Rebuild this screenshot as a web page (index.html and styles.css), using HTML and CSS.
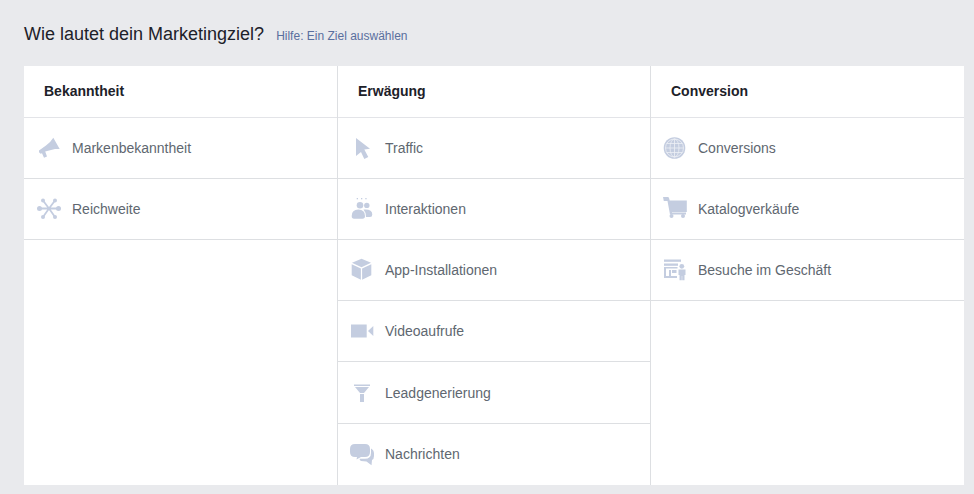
FILE: index.html
```
<!DOCTYPE html>
<html lang="de">
<head>
<meta charset="utf-8">
<title>Marketingziel</title>
<link rel="stylesheet" href="styles.css">
</head>
<body>
<header class="title-bar">
  <h1 class="title">Wie lautet dein Marketingziel?</h1>
  <a class="help" href="#">Hilfe: Ein Ziel auswählen</a>
</header>
<main class="board">
  <section class="col">
    <h2 class="col-head">Bekanntheit</h2>
    <div class="row"><span class="ico"><svg width="26" height="24" viewBox="0 0 26 24"><path class="f" d="M16.300 1.800 L22.700 13 L18 13 L8.200 15.500 L10 20.500 L7 21.700 L5 17.200 L3.500 17.700 Q1.300 16.500 2 14.500 L9 9.500 Q13.500 6.500 16.300 1.800Z"/></svg></span><span class="label">Markenbekanntheit</span></div>
    <div class="row"><span class="ico"><svg width="26" height="24" viewBox="0 0 26 24"><g class="s"><path d="M12 11.500 L6 3.500M12 11.500 L18 3.500M12 11.500 L3 11.500M12 11.500 L21 11.500M12 11.500 L6 20M12 11.500 L18 20"/></g><g class="f"><circle cx="6" cy="3.500" r="2"/><circle cx="18" cy="3.500" r="2"/><circle cx="2.500" cy="11.500" r="2.500"/><circle cx="21.500" cy="11.500" r="2.500"/><circle cx="6" cy="20" r="2"/><circle cx="18" cy="20" r="2"/></g></svg></span><span class="label">Reichweite</span></div>
  </section>
  <section class="col">
    <h2 class="col-head">Erwägung</h2>
    <div class="row"><span class="ico"><svg width="26" height="24" viewBox="0 0 26 24"><path class="f" d="M6 2 L20 12.800 L14.300 13.500 L18.300 21 L14.300 23 L11 16 L6 20Z"/></svg></span><span class="label">Traffic</span></div>
    <div class="row"><span class="ico"><svg width="26" height="24" viewBox="0 0 26 24"><g class="f"><rect x="6.700" y="1" width="1.300" height="1.300"/><rect x="11" y="1" width="1.300" height="1.300"/><rect x="15.300" y="1" width="1.300" height="1.300"/><circle cx="10" cy="8.200" r="3.300"/><circle cx="16.800" cy="8.400" r="2.700"/><path d="M1.700 19 Q1.700 12.500 8.300 12.500 Q15 12.500 15 19 Q15 21.800 12.500 21.800 L4 21.800 Q1.700 21.800 1.700 19Z"/><path d="M13.500 12.500 Q22.300 11.800 22.300 17.500 Q22.300 20 20 20 L16 20 Q16.200 15.500 13.500 12.500Z"/></g></svg></span><span class="label">Interaktionen</span></div>
    <div class="row"><span class="ico"><svg width="26" height="24" viewBox="0 0 26 24"><g class="f"><path d="M11.500 0.800 L21 4.800 L11.500 9.300 L2 4.800Z"/><path d="M1.700 6.200 L10.900 10.500 L10.900 21.800 L1.700 17.300Z"/><path d="M21.300 6.200 L12.100 10.500 L12.100 21.800 L21.300 17.300Z"/></g></svg></span><span class="label">App-Installationen</span></div>
    <div class="row"><span class="ico"><svg width="26" height="24" viewBox="0 0 26 24"><g class="f"><rect x="1" y="5.500" width="15.700" height="13"/><path d="M18 12 L23.300 7 L23.300 17Z"/></g></svg></span><span class="label">Videoaufrufe</span></div>
    <div class="row"><span class="ico"><svg width="26" height="24" viewBox="0 0 26 24"><g class="f"><rect x="4" y="3.500" width="16" height="1.500"/><path d="M5 6 L19 6 L14 12 L10 12Z"/><rect x="10" y="13" width="4" height="8"/></g></svg></span><span class="label">Leadgenerierung</span></div>
    <div class="row"><span class="ico"><svg width="26" height="24" viewBox="0 0 26 24"><g class="f"><path d="M5 2 L15 2 Q20 2 20 7 L20 10 Q20 15 15 15 L11 15 L6.500 17.500 L7 15 L5 15 Q0 15 0 10 L0 7 Q0 2 5 2Z"/><path d="M21 6.500 Q24 8 24 11.500 L24 14 Q24 17 22 18 L21.500 23.300 L16.500 19.500 L11 19 Q9.500 18 9.500 16.800 L15 16.800 Q21 16.800 21 11Z"/></g></svg></span><span class="label">Nachrichten</span></div>
  </section>
  <section class="col">
    <h2 class="col-head">Conversion</h2>
    <div class="row"><span class="ico"><svg width="26" height="24" viewBox="0 0 26 24"><circle class="f" cx="11.500" cy="12" r="10.800"/><g class="g"><circle cx="11.500" cy="12" r="9"/><ellipse cx="11.500" cy="12" rx="4.500" ry="9"/><path d="M11.500 3V21M2.500 12H20.500M3.500 7.500H19.500M3.500 16.500H19.500"/></g></svg></span><span class="label">Conversions</span></div>
    <div class="row"><span class="ico"><svg width="26" height="24" viewBox="0 0 26 24"><g class="f"><path d="M0 0 L5 0 Q6.200 0 6.600 3.500 L23.800 3.500 L23.800 15 L9 15 L9 15.500 L23 15.500 L23 17.500 L7 17.500 L4.500 4 L0.800 4Z"/><circle cx="8.500" cy="19" r="2"/><circle cx="20" cy="19" r="2"/></g></svg></span><span class="label">Katalogverkäufe</span></div>
    <div class="row"><span class="ico"><svg width="26" height="24" viewBox="0 0 26 24"><g class="f"><rect x="1" y="1.500" width="17" height="2.300"/><rect x="1" y="5.500" width="14" height="2.300"/><path d="M1 9 H14.500 V10.500 H3 V18 H6 V12 H8 V18 H14 V20 H1Z"/><rect x="9" y="12" width="4.500" height="3"/><circle cx="18.800" cy="8.300" r="2.400"/><path d="M15.500 11.500 H22.500 V17 H21.500 V22.200 H19.200 V18 H18.800 V22.200 H16.500 V17 H15.500Z"/></g></svg></span><span class="label">Besuche im Geschäft</span></div>
  </section>
</main>
</body>
</html>
```
FILE: styles.css
```
html, body {
  margin: 0;
  padding: 0;
  height: 494px;
  overflow: hidden;
  background: #e9eaed;
  font-family: "Liberation Sans", Arial, sans-serif;
}
.title-bar {
  display: flex;
  align-items: baseline;
  padding: 24px 0 0 24px;
  height: 66px;
  box-sizing: border-box;
  line-height: 21px;
}
.title {
  margin: 0;
  font-size: 18px;
  font-weight: 400;
  color: #1d2129;
}
.help {
  margin-left: 12px;
  font-size: 12px;
  color: #5a6f9e;
  text-decoration: none;
}
.board {
  display: grid;
  grid-template-columns: 314px 313px 313px;
  width: 940px;
  height: 419px;
  margin: 0 0 0 24px;
  background: #fff;
}
.col {
  border-right: 1px solid #dddfe2;
  display: flex;
  flex-direction: column;
}
.col:last-child { border-right: 0; }
.col-head {
  margin: 0;
  height: 52px;
  box-sizing: border-box;
  padding-left: 20px;
  border-bottom: 1px solid #e3e4e8;
  font-size: 14px;
  font-weight: 700;
  line-height: 50px;
  color: #1d2129;
}
.row {
  display: flex;
  align-items: center;
  height: 61px;
  box-sizing: border-box;
  padding: 0 0 0 12px;
  border-bottom: 1px solid #dddfe2;
}
.col:first-child .row { padding-left: 13px; }
.col:nth-child(2) .row:nth-child(6) { height: 62px; }
.col:nth-child(2) .row:last-child { border-bottom-color: transparent; }
.ico {
  display: flex;
  width: 26px;
  height: 24px;
  margin-right: 9px;
}
.label {
  font-size: 14px;
  color: #606770;
}
.f { fill: #c4cde0; }
.s { stroke: #c4cde0; stroke-width: 1.800; fill: none; }
.g { stroke: #fff; stroke-width: 0.800; fill: none; opacity: 0.7; }
```
